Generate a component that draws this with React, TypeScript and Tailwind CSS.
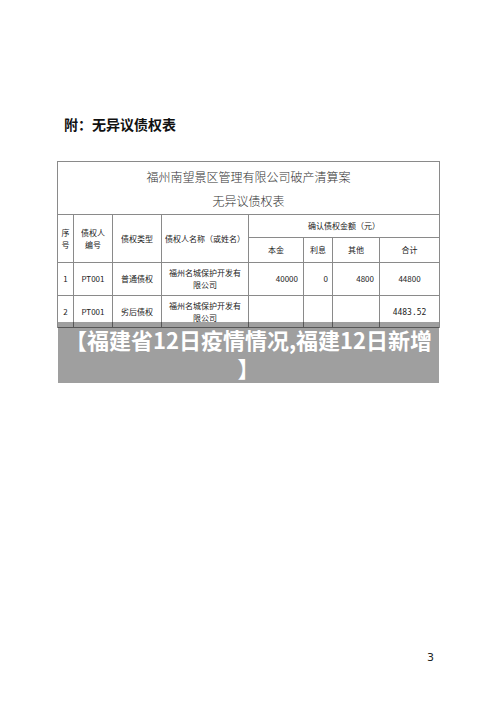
import React from "react";

const cjk = { fontFamily: '"Noto Sans CJK SC", "Noto Sans", sans-serif' };

export default function App() {
  const cell = "border border-[#8a8a8a] text-center align-middle text-[8px] leading-[12px] text-[#222] p-0";
  return (
    <div className="relative w-[500px] h-[706px] bg-white flex flex-col" style={cjk}>
      <div className="pt-[114px] pl-[64px] text-[14px] leading-[20px] font-bold text-[#111]">附：无异议债权表</div>
      <div className="mt-[27px] ml-[57px]">
        <table className="border-collapse table-fixed w-[382px]">
          <colgroup>
            <col className="w-[16px]" />
            <col className="w-[39px]" />
            <col className="w-[49px]" />
            <col className="w-[87px]" />
            <col className="w-[55px]" />
            <col className="w-[29px]" />
            <col className="w-[47px]" />
            <col className="w-[60px]" />
          </colgroup>
          <tbody>
            <tr className="h-[53px]">
              <td colSpan={8} className="border border-[#8a8a8a] text-center align-middle text-[12px] leading-[24px] text-[#333] font-light pt-[2px]">
                福州南望景区管理有限公司破产清算案
                <br />
                无异议债权表
              </td>
            </tr>
            <tr className="h-[23px]">
              <td rowSpan={2} className={cell}>序<br />号</td>
              <td rowSpan={2} className={cell}>债权人<br />编号</td>
              <td rowSpan={2} className={cell}>债权类型</td>
              <td rowSpan={2} className={cell}>债权人名称（或姓名）</td>
              <td colSpan={4} className={cell}>确认债权金额（元）</td>
            </tr>
            <tr className="h-[25px]">
              <td className={cell}>本金</td>
              <td className={cell}>利息</td>
              <td className={cell}>其他</td>
              <td className={cell}>合计</td>
            </tr>
            <tr className="h-[33px]">
              <td className={cell}>1</td>
              <td className={cell}>PT001</td>
              <td className={cell}>普通债权</td>
              <td className={cell}>福州名城保护开发有<br />限公司</td>
              <td className={`${cell} text-right pr-[5px]`}>40000</td>
              <td className={`${cell} text-right pr-[4px]`}>0</td>
              <td className={`${cell} text-right pr-[5px]`}>4800</td>
              <td className={cell}>44800</td>
            </tr>
            <tr className="h-[32px]">
              <td className={cell}>2</td>
              <td className={cell}>PT001</td>
              <td className={cell}>劣后债权</td>
              <td className={cell}>福州名城保护开发有<br />限公司</td>
              <td className={cell}></td>
              <td className={cell}></td>
              <td className={cell}></td>
              <td className={`${cell} pt-[2px]`}><span style={{ fontFamily: '"DejaVu Sans Mono", monospace' }}>4483.52</span></td>
            </tr>
          </tbody>
        </table>
      </div>
      <div className="mt-auto mb-[41px] pr-[66px] text-right text-[11px] leading-[14px] text-[#222]" style={{ fontFamily: '"DejaVu Sans", sans-serif' }}>3</div>

      <div className="absolute left-[58px] top-[322px] w-[381px] h-[61px] bg-[rgba(0,0,0,0.375)] flex items-center justify-center text-center text-white font-bold text-[22px] leading-[28px]">
        <div>
          【福建省12日疫情情况,福建12日新增
          <br />
          】
        </div>
      </div>
    </div>
  );
}
